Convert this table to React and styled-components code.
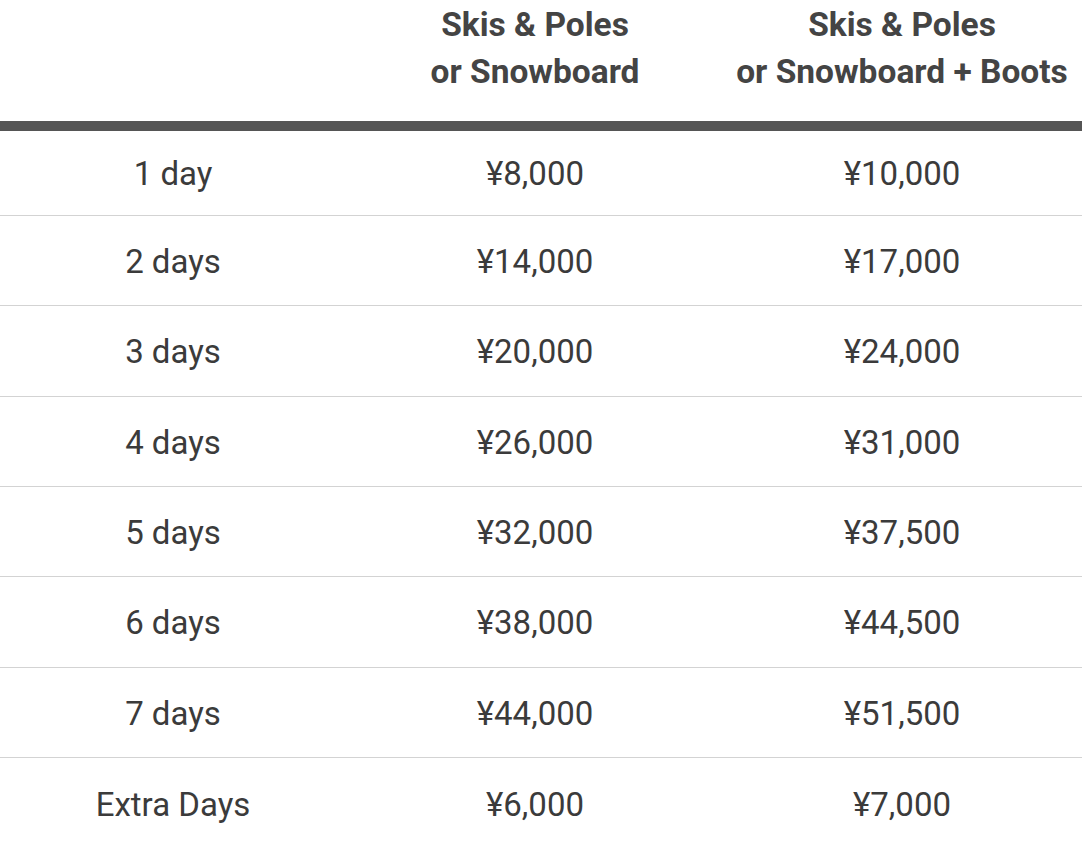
import React from "react";
import styled, { createGlobalStyle } from "styled-components";

const Global = createGlobalStyle`
  html, body { margin: 0; padding: 0; background: #ffffff; }
  body { font-family: Roboto, "Noto Sans", "Liberation Sans", sans-serif; color: #3d3d3d; }
`;

const Table = styled.div`
  width: 1082px;
  display: flex;
  flex-direction: column;
`;

const Grid = styled.div`
  display: grid;
  grid-template-columns: 346px 378px 356px;
  align-items: center;
`;

const HeaderRow = styled(Grid)`
  height: 120px;
  box-sizing: content-box;
  align-items: start;
  padding-top: 1px;
  border-bottom: 10px solid #555555;
`;

const HeadCell = styled.div`
  text-align: center;
  font-weight: 700;
  font-size: 33.5px;
  line-height: 47px;
  color: #444444;
  white-space: nowrap;
`;

const Row = styled(Grid)`
  box-sizing: border-box;
  height: ${(p) => (p.$first ? "85px" : "90.33px")};
  padding-top: ${(p) => (p.$first ? "0" : "2px")};
  border-bottom: ${(p) => (p.$last ? "none" : "1px solid #d3d3d3")};
`;

const Cell = styled.div`
  text-align: center;
  font-size: 33px;
  font-weight: 400;
  color: #3b3b3b;
  white-space: nowrap;
`;

const rows = [
  ["1 day", "¥8,000", "¥10,000"],
  ["2 days", "¥14,000", "¥17,000"],
  ["3 days", "¥20,000", "¥24,000"],
  ["4 days", "¥26,000", "¥31,000"],
  ["5 days", "¥32,000", "¥37,500"],
  ["6 days", "¥38,000", "¥44,500"],
  ["7 days", "¥44,000", "¥51,500"],
  ["Extra Days", "¥6,000", "¥7,000"],
];

export default function App() {
  return (
    <>
      <Global />
      <Table>
        <HeaderRow>
          <HeadCell />
          <HeadCell>
            Skis &amp; Poles
            <br />
            or Snowboard
          </HeadCell>
          <HeadCell>
            Skis &amp; Poles
            <br />
            or Snowboard + Boots
          </HeadCell>
        </HeaderRow>
        {rows.map((r, i) => (
          <Row key={r[0]} $first={i === 0} $last={i === rows.length - 1}>
            {r.map((c, j) => (
              <Cell key={j}>{c}</Cell>
            ))}
          </Row>
        ))}
      </Table>
    </>
  );
}
